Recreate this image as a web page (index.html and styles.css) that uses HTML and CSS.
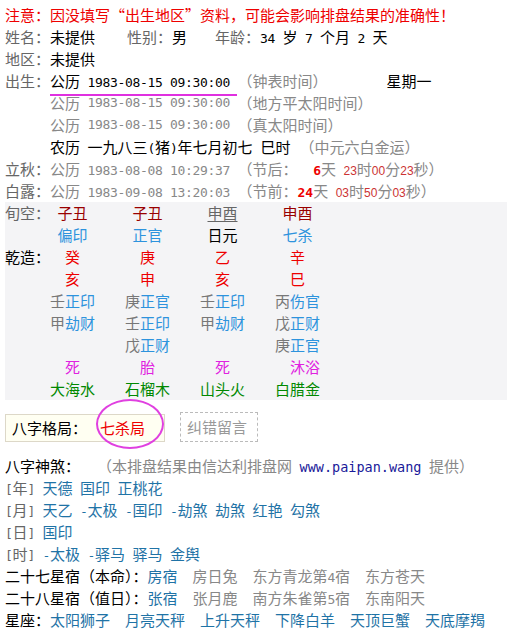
FILE: index.html
```html
<!DOCTYPE html>
<html lang="zh-CN">
<head>
<meta charset="utf-8">
<title>八字排盘</title>
<link rel="stylesheet" href="styles.css">
</head>
<body>
<div class="page">
  <section class="info">
    <div class="line warn">注意：因没填写“出生地区”资料，可能会影响排盘结果的准确性！</div>
    <div class="line">
      <span class="lb">姓名：</span><span>未提供</span>
      <span class="lb sex">性别：</span><span>男</span>
      <span class="lb age">年龄：</span><span><i class="n">34 </i>岁<i class="n"> 7 </i>个月<i class="n"> 2 </i>天</span>
    </div>
    <div class="line"><span class="lb">地区：</span><span>未提供</span></div>
    <div class="line">
      <span class="lb">出生：</span><span class="u">公历<i class="n"> 1983-08-15 09:30:00 </i></span><span class="g">（钟表时间）</span>
      <span class="week">星期一</span>
    </div>
    <div class="line indent g">公历<i class="n"> 1983-08-15 09:30:00 </i>（地方平太阳时间）</div>
    <div class="line indent g">公历<i class="n"> 1983-08-15 09:30:00 </i>（真太阳时间）</div>
    <div class="line indent">
      <span>农历<i class="n"> </i>一九八三<i class="n">(</i>猪<i class="n">)</i>年七月初七</span>
      <span class="shi">巳时</span>
      <span class="g yun">（中元六白金运）</span>
    </div>
    <div class="line g">
      <span class="lb">立秋：</span><span>公历<i class="n"> 1983-08-08 10:29:37 </i>（节后：<b class="d">  6</b>天<i class="n"> </i><i class="dn">23</i>时<i class="dn">00</i>分<i class="dn">23</i>秒）</span>
    </div>
    <div class="line g">
      <span class="lb">白露：</span><span>公历<i class="n"> 1983-09-08 13:20:03 </i>（节前：<b class="d">24</b>天<i class="n"> </i><i class="dn">03</i>时<i class="dn">50</i>分<i class="dn">03</i>秒）</span>
    </div>
  </section>

  <section class="pillars">
    <span class="plb lb">旬空：</span><span class="c dr">子丑</span><span class="c dr">子丑</span><span class="c"><span class="ul">申酉</span></span><span class="c dr">申酉</span>
    <span class="plb"></span><span class="c bl">偏印</span><span class="c bl">正官</span><span class="c">日元</span><span class="c bl">七杀</span>
    <span class="plb">乾造：</span><span class="c red">癸</span><span class="c red">庚</span><span class="c red">乙</span><span class="c red">辛</span>
    <span class="plb"></span><span class="c red">亥</span><span class="c red">申</span><span class="c red">亥</span><span class="c red">巳</span>
    <span class="plb"></span><span class="c"><span class="st">壬</span><span class="bl">正印</span></span><span class="c"><span class="st">庚</span><span class="bl">正官</span></span><span class="c"><span class="st">壬</span><span class="bl">正印</span></span><span class="c"><span class="st">丙</span><span class="bl">伤官</span></span>
    <span class="plb"></span><span class="c"><span class="st">甲</span><span class="bl">劫财</span></span><span class="c"><span class="st">壬</span><span class="bl">正印</span></span><span class="c"><span class="st">甲</span><span class="bl">劫财</span></span><span class="c"><span class="st">戊</span><span class="bl">正财</span></span>
    <span class="plb"></span><span class="c"></span><span class="c"><span class="st">戊</span><span class="bl">正财</span></span><span class="c"></span><span class="c"><span class="st">庚</span><span class="bl">正官</span></span>
    <span class="plb"></span><span class="c mg">死</span><span class="c mg">胎</span><span class="c mg">死</span><span class="c mg shift">沐浴</span>
    <span class="plb"></span><span class="c gr">大海水</span><span class="c gr">石榴木</span><span class="c gr">山头火</span><span class="c gr">白腊金</span>
  </section>

  <section class="geju-row">
    <div class="geju">八字格局：<span class="red gname">七杀局</span><span class="circle"></span></div>
    <div class="jiucuo">纠错留言</div>
  </section>

  <section class="shensha">
    <div class="line">
      <span>八字神煞：</span>
      <span class="g src">（本排盘结果由信达利排盘网<i class="n"> </i><span class="url">www.paipan.wang</span><i class="n"> </i>提供）</span>
    </div>
    <div class="line ss">
      <span class="lb"><i class="n">[</i>年<i class="n">]</i></span><span class="t">天德</span><span class="t">国印</span><span class="t">正桃花</span>
    </div>
    <div class="line ss">
      <span class="lb"><i class="n">[</i>月<i class="n">]</i></span><span class="t">天乙</span><span class="t"><i class="n">-</i>太极</span><span class="t"><i class="n">-</i>国印</span><span class="t"><i class="n">-</i>劫煞</span><span class="t">劫煞</span><span class="t">红艳</span><span class="t">勾煞</span>
    </div>
    <div class="line ss">
      <span class="lb"><i class="n">[</i>日<i class="n">]</i></span><span class="t">国印</span>
    </div>
    <div class="line ss">
      <span class="lb"><i class="n">[</i>时<i class="n">]</i></span><span class="t"><i class="n">-</i>太极</span><span class="t"><i class="n">-</i>驿马</span><span class="t">驿马</span><span class="t">金舆</span>
    </div>
    <div class="line xs">
      <span>二十七星宿（本命）：<span class="t">房宿</span></span><span class="g">房日兔</span><span class="g">东方青龙第<i class="n">4</i>宿</span><span class="g">东方苍天</span>
    </div>
    <div class="line xs">
      <span>二十八星宿（值日）：<span class="t">张宿</span></span><span class="g">张月鹿</span><span class="g">南方朱雀第<i class="n">5</i>宿</span><span class="g">东南阳天</span>
    </div>
    <div class="line xs">
      <span>星座：<span class="t">太阳狮子</span></span><span class="t">月亮天秤</span><span class="t">上升天秤</span><span class="t">下降白羊</span><span class="t">天顶巨蟹</span><span class="t">天底摩羯</span>
    </div>
  </section>
</div>
</body>
</html>
```

FILE: styles.css
```css
* {
  box-sizing: border-box;
  margin: 0;
  padding: 0;
}

body {
  font-family: "Noto Sans CJK SC", sans-serif;
  font-size: 15px;
  line-height: 22px;
  color: #000;
  background: #fff;
}

.page {
  padding: 4px 0 0 5px;
}

.line {
  display: flex;
  align-items: flex-start;
  height: 22px;
  white-space: nowrap;
}

.n {
  font-family: "DejaVu Sans Mono", monospace;
  font-size: 13px;
  letter-spacing: -0.33px;
  font-style: normal;
  white-space: pre;
}

.warn { color: #e00; }
.lb { color: #666; }
.g { color: #888; }
.red { color: #e00; }
.dr { color: #900; }
.bl { color: #2d93dd; }
.st { color: #777; }
.mg { color: #e020e0; }
.gr { color: #080; }
.t { color: #1f73a6; }

.sex { margin-left: 32px; }
.age { margin-left: 28px; }

.u {
  border-bottom: 2px solid #e030e0;
}

.week { margin-left: 59px; }

.indent { padding-left: 45px; }

.shi { margin-left: 8px; }
.yun { margin-left: 9px; }

.d {
  font-family: "DejaVu Sans Mono", monospace;
  font-size: 13px;
  font-weight: bold;
  color: #e00;
  white-space: pre;
}

.dn {
  font-family: "Liberation Sans", sans-serif;
  font-size: 12px;
  font-style: normal;
  color: #c33;
}

/* four pillars */
.pillars {
  display: grid;
  grid-template-columns: 30px repeat(4, 75px);
  grid-auto-rows: 22px;
  background: #f4f4f6;
}

.plb {
  white-space: nowrap;
}

.c {
  text-align: center;
  white-space: nowrap;
}

.ul {
  color: #666;
  text-decoration: underline;
  text-decoration-color: #666;
  text-underline-offset: 2px;
}

.shift { padding-left: 15px; }

/* geju */
.geju-row {
  display: flex;
  align-items: flex-end;
  margin-top: 12px;
}

.geju {
  position: relative;
  height: 28px;
  line-height: 26px;
  padding: 0 19px 0 6px;
  border: 1px solid #ddd8c8;
  background: #fffff2;
}

.gname { margin-left: 13px; }

.circle {
  position: absolute;
  left: 90px;
  top: -16px;
  width: 68px;
  height: 50px;
  border: 2.5px solid #e040e0;
  border-radius: 50%;
}

.jiucuo {
  margin-left: 15px;
  height: 30px;
  line-height: 28px;
  padding: 0 10px 0 6px;
  border: 1px dashed #bbb;
  color: #999;
}

/* shensha */
.shensha {
  margin-top: 13px;
}

.src { margin-left: 17px; }

.url {
  font-family: "DejaVu Sans Mono", monospace;
  font-size: 13.5px;
  color: #1a1a9a;
}

.ss { gap: 7.5px; }
.xs { gap: 15px; }
```
